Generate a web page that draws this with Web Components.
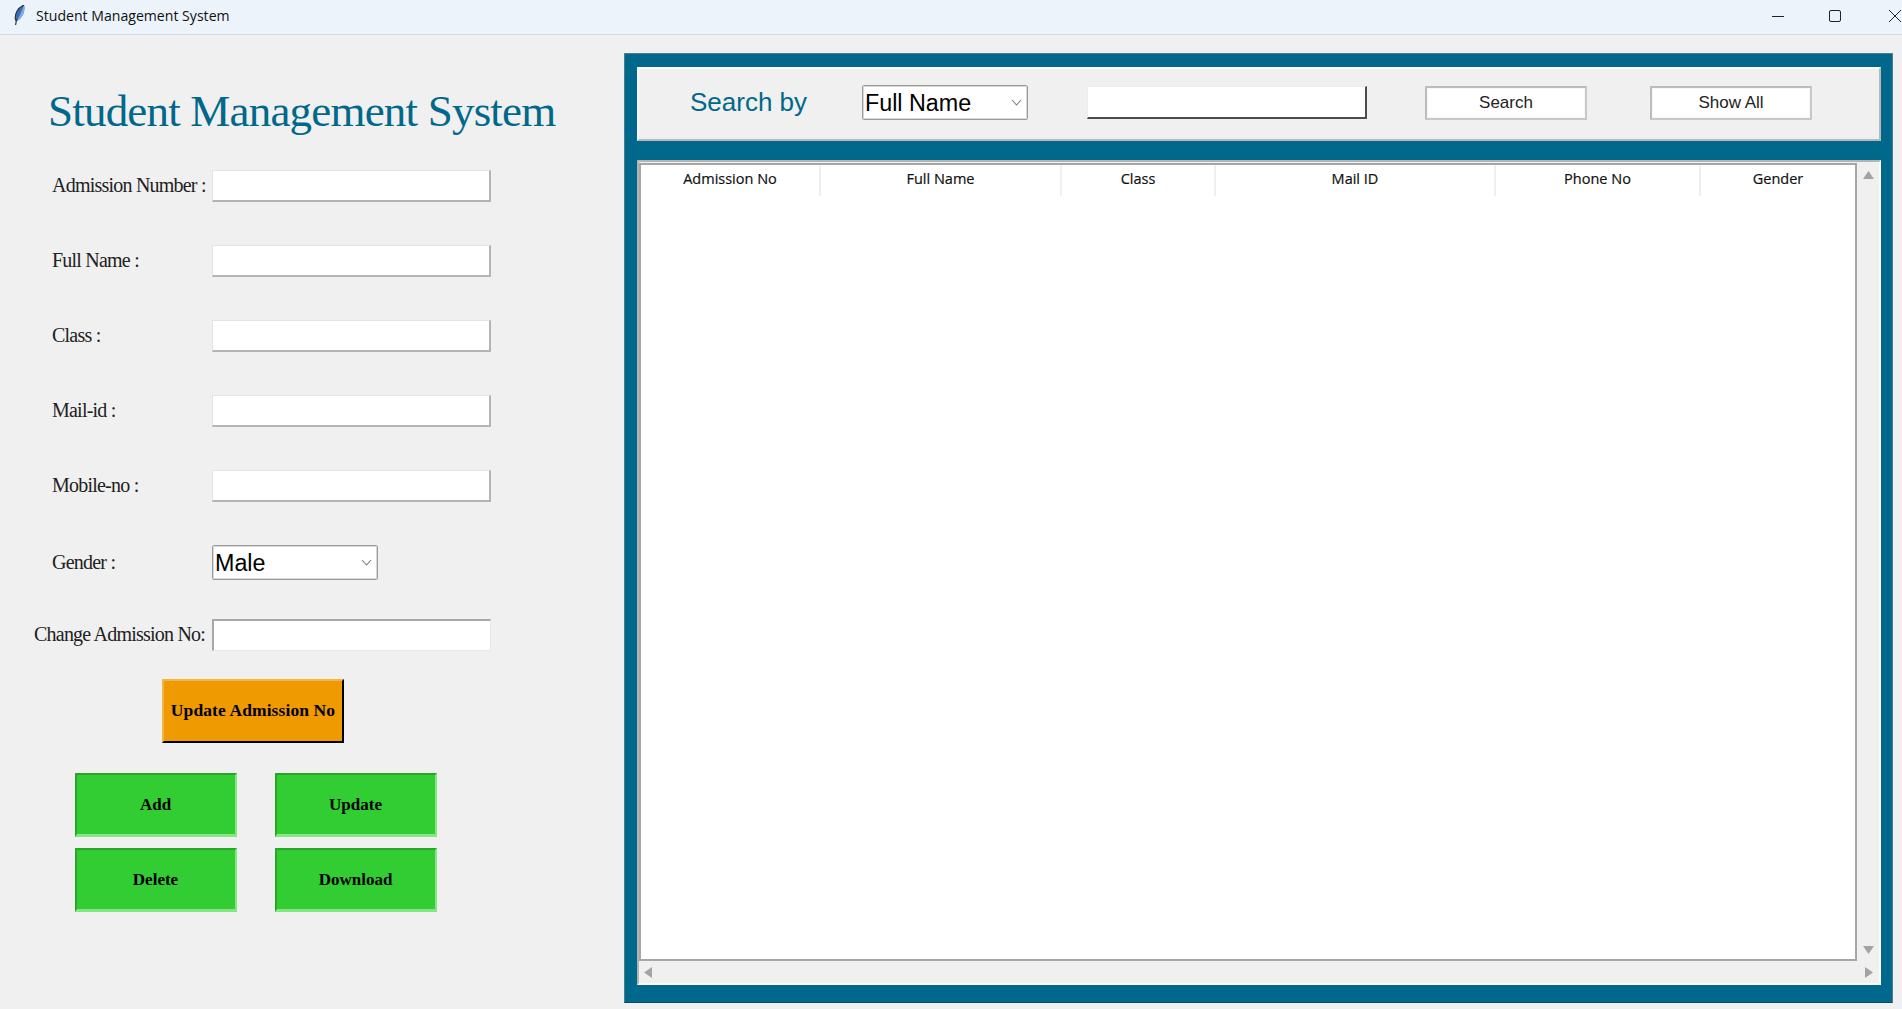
<!DOCTYPE html>
<html lang="en">
<head>
<meta charset="utf-8">
<title>Student Management System</title>
<style>
    html, body { margin: 0; padding: 0; height: 100%; background: #f0f0f0; overflow: hidden; }
</style>
</head>
<body>
<app-window>
    <title-bar slot="bar">Student Management System</title-bar>
    <student-form slot="left"></student-form>
    <records-panel slot="right"></records-panel>
</app-window>

<script>
// small helper, every component has the same shadow setup
class TkElement extends HTMLElement {
    constructor() {
        super();
        this.attachShadow({ mode: 'open' });
    }

    connectedCallback() {
        this.shadowRoot.innerHTML = this.markup();
    }
}

class AppWindow extends TkElement {
    markup() {
        return `
            <style>
                :host { display: flex; flex-direction: column; width: 1902px; height: 1009px; background: #f0f0f0; overflow: hidden; }
                .main { display: flex; flex: 1; min-height: 0; }
                .left { width: 624px; flex: none; }
                .right { width: 1269px; flex: none; padding-top: 18px; padding-bottom: 6px; box-sizing: border-box; display: flex; }
            </style>
            <slot name="bar"></slot>
            <div class="main">
                <div class="left"><slot name="left"></slot></div>
                <div class="right"><slot name="right"></slot></div>
            </div>
        `;
    }
}

class TitleBar extends TkElement {
    markup() {
        return `
            <style>
                :host { display: flex; align-items: center; height: 35px; box-sizing: border-box; background: #ecf3fa; border-bottom: 1px solid #d5dade; flex: none; }
                .icon { width: 11px; height: 20px; margin: 0 11px 4px 14px; flex: none; display: block; }
                .text { font: 14.1px "Open Sans", sans-serif; color: #111; white-space: nowrap; flex: 1; padding-bottom: 3px; }
                .ctrl { display: flex; align-items: center; padding-bottom: 2px; }
                .ctrl svg { display: block; }
                .min { margin-right: 45px; }
                .max { margin-right: 47px; }
                .close { margin-right: 0; }
            </style>
            <svg class="icon" viewBox="0 0 11 20">
                <path d="M1.6 15.5 C0 9 4 2.5 10 0 C11.6 6 8.4 13 3 16 Z" fill="#3a6fb8"/>
                <path d="M3 16 C5.5 11 8 6 10 0 C11.6 6 8.4 13 3 16 Z" fill="#86aee0"/>
                <path d="M1.6 15.5 C0 9 4 2.5 10 0" fill="none" stroke="#27303f" stroke-width="1.1"/>
                <path d="M1.6 20 L2.6 14" stroke="#333" stroke-width="1.2"/>
            </svg>
            <span class="text"><slot></slot></span>
            <div class="ctrl">
                <svg class="min" width="12" height="12" viewBox="0 0 12 12"><path d="M0 6.5H12" stroke="#222" stroke-width="1"/></svg>
                <svg class="max" width="12" height="12" viewBox="0 0 12 12"><rect x=".5" y=".5" width="11" height="11" rx="1.5" fill="none" stroke="#222"/></svg>
                <svg class="close" width="14" height="12" viewBox="0 0 14 12"><path d="M1 0L13 12M13 0L1 12" stroke="#222" stroke-width="1"/></svg>
            </div>
        `;
    }
}

class TkEntry extends TkElement {
    markup() {
        return `
            <style>
                :host { display: block; box-sizing: border-box; width: var(--w, 279px); height: var(--h, 32px); background: #fff;
                    border: 1px solid #e3e3e3; border-right: 2px solid #b4b4b4; border-bottom: 2px solid #b4b4b4; }
                :host([sunken]) { border: 1px solid #e8e8e8; border-top: 2px solid #a8a8a8; border-left: 2px solid #a8a8a8; }
                :host([dark]) { border: 1px solid #ececec; border-right: 2px solid #4c4c4c; border-bottom: 2px solid #4c4c4c; }
            </style>
        `;
    }
}

class TkCombo extends TkElement {
    markup() {
        return `
            <style>
                :host { display: flex; align-items: center; box-sizing: border-box; width: var(--w, 166px); height: 35px; background: #fff;
                    border: 1px solid #9a9a9a; outline: 1px solid #d8d8d8; outline-offset: -2px; border-radius: 2px; padding: 0 5px 0 2px; }
                .val { flex: 1; font: 23.3px "Liberation Sans", Arial, sans-serif; color: #000; white-space: nowrap; padding-top: 2px; }
                svg { display: block; flex: none; }
            </style>
            <span class="val"><slot></slot></span>
            <svg width="11" height="7" viewBox="0 0 11 7"><path d="M1 1L5.5 6L10 1" fill="none" stroke="#7a7a7a" stroke-width="1.1"/></svg>
        `;
    }
}

class TkButton extends TkElement {
    markup() {
        return `
            <style>
                :host { display: flex; align-items: center; justify-content: center; box-sizing: border-box; width: var(--w, 162px); height: var(--h, 64px);
                    white-space: nowrap; color: #000; }
                :host([kind=orange]) { width: 182px; height: 64px; background: #ee9a00; border: 2px solid; border-color: #f4b548 #000 #000 #f4b548;
                    font: bold 17.5px "Liberation Serif", serif; letter-spacing: .1px; padding-bottom: 1px; }
                :host([kind=green]) { background: #32cd32; border: 2px solid; border-color: #2aa52a #86e686 #86e686 #2aa52a; border-bottom-width: 3px;
                    font: bold 17px "Liberation Serif", serif; padding-right: 1px; }
                :host([kind=plain]) { height: 34px; background: #fff; border: 2px solid; border-color: #bcbcbc #c8c8c8 #c8c8c8 #bcbcbc; outline: 1px solid #f7f7f7; outline-offset: -3px;
                    font: 17px "Liberation Sans", Arial, sans-serif; color: #222; padding-top: 1px; }
            </style>
            <slot></slot>
        `;
    }
}

class FormRow extends TkElement {
    markup() {
        return `
            <style>
                :host { display: grid; grid-template-columns: 212px auto; align-items: center; }
                .label { padding-left: var(--label-x, 52px); font: 20px "Liberation Serif", serif; letter-spacing: -.78px; color: #222; white-space: nowrap; padding-bottom: 1px; }
            </style>
            <span class="label">${this.getAttribute('label')}</span>
            <div><slot></slot></div>
        `;
    }
}

class StudentForm extends TkElement {
    markup() {
        return `
            <style>
                :host { display: flex; flex-direction: column; align-items: flex-start; }
                h1 { margin: 40px 0 0 48px; height: 95px; font: 400 45px/72px "Liberation Serif", serif; color: #00688b; white-space: nowrap; letter-spacing: -.8px; }
                form-row { margin-bottom: 43px; width: 100%; }
                .gender { margin-bottom: 39px; }
                .change { margin-bottom: 28px; }
                .update { margin-left: 162px; margin-bottom: 30px; }
                .actions { display: grid; grid-template-columns: 162px 162px; column-gap: 38px; row-gap: 11px; margin-left: 75px; }
            </style>
            <h1>Student Management System</h1>
            <form-row label="Admission Number :"><tk-entry></tk-entry></form-row>
            <form-row label="Full Name :"><tk-entry></tk-entry></form-row>
            <form-row label="Class :"><tk-entry></tk-entry></form-row>
            <form-row label="Mail-id :"><tk-entry></tk-entry></form-row>
            <form-row label="Mobile-no :"><tk-entry></tk-entry></form-row>
            <form-row class="gender" label="Gender :"><tk-combo>Male</tk-combo></form-row>
            <form-row class="change" label="Change Admission No:" style="--label-x: 34px"><tk-entry sunken></tk-entry></form-row>
            <tk-button class="update" kind="orange">Update Admission No</tk-button>
            <div class="actions">
                <tk-button kind="green">Add</tk-button>
                <tk-button kind="green">Update</tk-button>
                <tk-button kind="green">Delete</tk-button>
                <tk-button kind="green">Download</tk-button>
            </div>
        `;
    }
}

class SearchBar extends TkElement {
    markup() {
        return `
            <style>
                :host { display: grid; grid-template-columns: 172px 225px 338px 225px 162px; align-items: center; box-sizing: border-box; height: 74px; padding: 0 0 3px 51px;
                    background: #f0f0f0; border: 2px solid; border-color: #fbfbfb #b8b8b8 #b8b8b8 #fbfbfb; flex: none; }
                .lbl { font: 26px "Liberation Sans", Arial, sans-serif; color: #00688b; white-space: nowrap; }
                tk-entry { --w: 280px; --h: 33px; }
            </style>
            <span class="lbl">Search by</span>
            <tk-combo>Full Name</tk-combo>
            <tk-entry dark></tk-entry>
            <tk-button kind="plain">Search</tk-button>
            <tk-button kind="plain">Show All</tk-button>
        `;
    }
}

class RecordsTable extends TkElement {
    markup() {
        const cols = ['Admission No', 'Full Name', 'Class', 'Mail ID', 'Phone No', 'Gender'];
        return `
            <style>
                :host { display: grid; grid-template-columns: 1fr 22px; grid-template-rows: 1fr 22px; flex: 1; min-height: 0; box-sizing: border-box; background: #f0f0f0;
                    border: 2px solid; border-color: #b4b4b4 #fbfbfb #fbfbfb #b4b4b4; }
                .tree { background: #fff; border: 2px solid #a6a6a6; margin-top: 1px; }
                .head { display: grid; grid-template-columns: 180px 241px 154px 280px 205px 1fr; height: 31px; }
                .head span { display: flex; align-items: center; justify-content: center; padding-bottom: 5px; font: 14.5px "Open Sans", sans-serif; -webkit-text-stroke: .2px #111; color: #111; border-right: 2px solid #f0f0f0; }
                .head span:last-child { border-right: 0; }
                .sb { display: flex; align-items: center; justify-content: space-between; background: #f0f0f0; }
                .v { flex-direction: column; padding: 9px 0 7px; }
                .h { padding: 0 6px 0 5px; grid-column: 1 / -1; }
                svg { display: block; }
            </style>
            <div class="tree">
                <div class="head">${cols.map(c => `<span>${c}</span>`).join('')}</div>
            </div>
            <div class="sb v">
                <svg width="11" height="8" viewBox="0 0 11 8"><path d="M5.5 0L11 8H0Z" fill="#a3a3a3"/></svg>
                <svg width="11" height="8" viewBox="0 0 11 8"><path d="M0 0H11L5.5 8Z" fill="#a3a3a3"/></svg>
            </div>
            <div class="sb h">
                <svg width="8" height="11" viewBox="0 0 8 11"><path d="M8 0V11L0 5.5Z" fill="#a3a3a3"/></svg>
                <svg width="8" height="11" viewBox="0 0 8 11"><path d="M0 0V11L8 5.5Z" fill="#a3a3a3"/></svg>
            </div>
        `;
    }
}

class RecordsPanel extends TkElement {
    markup() {
        return `
            <style>
                :host { display: flex; flex-direction: column; flex: 1; box-sizing: border-box; gap: 19px; padding: 13px 11px 17px 12px; background: #00688b;
                    border: 1px solid; border-color: #4a7f92 #4a7f92 #00506c #4a7f92; }
            </style>
            <search-bar></search-bar>
            <records-table></records-table>
        `;
    }
}

customElements.define('app-window', AppWindow);
customElements.define('title-bar', TitleBar);
customElements.define('tk-entry', TkEntry);
customElements.define('tk-combo', TkCombo);
customElements.define('tk-button', TkButton);
customElements.define('form-row', FormRow);
customElements.define('student-form', StudentForm);
customElements.define('search-bar', SearchBar);
customElements.define('records-table', RecordsTable);
customElements.define('records-panel', RecordsPanel);
</script>
</body>
</html>
